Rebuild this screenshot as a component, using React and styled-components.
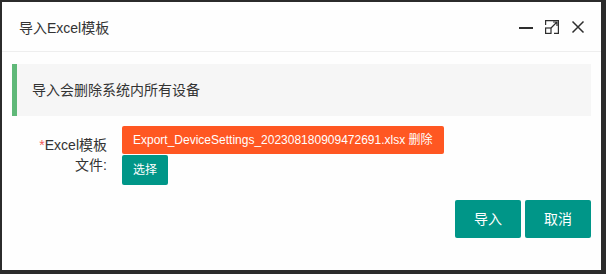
import React from 'react';
import styled, { createGlobalStyle } from 'styled-components';

const GlobalStyle = createGlobalStyle`
  html, body {
    margin: 0;
    padding: 0;
    background: #2b2b2b;
  }
  body {
    font-family: "Liberation Sans", "Noto Sans CJK SC", sans-serif;
    color: #333;
  }
`;

const Frame = styled.div`
  padding: 2px 5px 4px 2px;
`;

const StyledDialog = styled.div`
  width: 599px;
  height: 268px;
  background: #fefefe;
  display: flex;
  flex-direction: column;
`;

const TitleBar = styled.div`
  height: 49px;
  border-bottom: 1px solid #eee;
  display: flex;
  align-items: center;
  justify-content: space-between;
  padding: 0 16px 0 17px;
  font-size: 14px;
  color: #333;
`;

const Tools = styled.div`
  display: flex;
  align-items: center;
  gap: 12px;
`;

const ToolIcon = styled.svg`
  width: 14px;
  height: 14px;
  display: block;
  stroke: #2e2e2e;
  fill: none;
`;

const Body = styled.div`
  padding: 12px 10px 0 10px;
  display: flex;
  flex-direction: column;
`;

const Quote = styled.div`
  border-left: 5px solid #5fb878;
  background: #f6f6f6;
  padding: 15px 15px;
  line-height: 22px;
  font-size: 14px;
  color: #333;
`;

const FormItem = styled.div`
  display: flex;
  margin-top: 10px;
`;

const Label = styled.label`
  width: 80px;
  padding: 9px 15px;
  line-height: 20px;
  font-size: 14px;
  text-align: right;
  color: #333;
  flex-shrink: 0;

  em {
    font-style: normal;
    color: #f25a5a;
  }
`;

const InputBlock = styled.div`
  display: flex;
  flex-direction: column;
  align-items: flex-start;
  gap: 1px;
`;

const FileTag = styled.div`
  height: 28px;
  line-height: 28px;
  padding: 0 11px;
  background: #ff5722;
  color: #fff;
  font-size: 12px;
  border-radius: 2px;
  white-space: nowrap;
`;

const Button = styled.button`
  border: 0;
  border-radius: 2px;
  background: #009688;
  color: #fff;
  font-family: inherit;
  cursor: pointer;
  height: ${({ $size }) => ($size === 'sm' ? '30px' : '38px')};
  line-height: ${({ $size }) => ($size === 'sm' ? '30px' : '38px')};
  padding: ${({ $size }) => ($size === 'sm' ? '0 11px' : '0 19px')};
  font-size: ${({ $size }) => ($size === 'sm' ? '12px' : '14px')};
`;

const Footer = styled.div`
  display: flex;
  justify-content: flex-end;
  gap: 4px;
  padding: 15px 0 0 0;
`;

const App = () => {
  return (
    <>
      <GlobalStyle />
      <Frame>
        <StyledDialog>
          <TitleBar>
            <span>导入Excel模板</span>
            <Tools>
              <ToolIcon viewBox="0 0 14 14" strokeWidth="2">
                <path d="M0 8h14" />
              </ToolIcon>
              <ToolIcon viewBox="0 0 14 14" strokeWidth="1.2">
                <path d="M0.6 5V0.6h12.8v12.8H9" />
                <rect x="0.6" y="8" width="5.4" height="5.4" />
                <path d="M6 8l6-6M8 2h4v4" />
              </ToolIcon>
              <ToolIcon viewBox="0 0 14 14" strokeWidth="1.5">
                <path d="M1.5 1.5l11 11M12.5 1.5l-11 11" />
              </ToolIcon>
            </Tools>
          </TitleBar>

          <Body>
            <Quote>导入会删除系统内所有设备</Quote>

            <FormItem>
              <Label>
                <em>*</em>Excel模板文件:
              </Label>
              <InputBlock>
                <FileTag>Export_DeviceSettings_202308180909472691.xlsx 删除</FileTag>
                <Button $size="sm">选择</Button>
              </InputBlock>
            </FormItem>

            <Footer>
              <Button>导入</Button>
              <Button>取消</Button>
            </Footer>
          </Body>
        </StyledDialog>
      </Frame>
    </>
  );
};

export default App;
